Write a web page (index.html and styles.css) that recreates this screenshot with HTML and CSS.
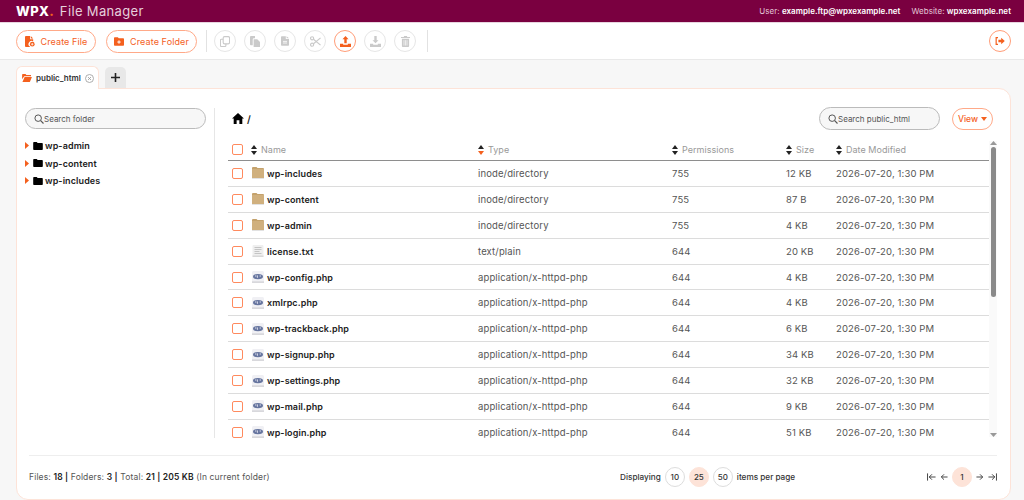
FILE: index.html
```html
<!DOCTYPE html>
<html lang="en">
<head>
    <meta charset="UTF-8">
    <meta name="viewport" content="width=device-width, initial-scale=1.0">
    <title>File Manager</title>
    <link rel="stylesheet" href="styles.css">
</head>
<body>
    <svg class="sprites" width="0" height="0">
        <symbol id="i-sort" viewBox="0 0 6 10"><path d="M3 0l3 4H0z"/><path d="M3 10L0 6h6z"/></symbol>
        <symbol id="i-sort-down" viewBox="0 0 6 10"><path d="M3 0l3 4H0z" fill="#222"/><path d="M3 10L0 6h6z" fill="#f4601e"/></symbol>
        <symbol id="i-caret" viewBox="0 0 4 7"><path d="M0 0l4 3.5L0 7z"/></symbol>
        <symbol id="i-folder" viewBox="0 0 12 10"><path d="M1 0h3.4l1.2 1.3H11a1 1 0 0 1 1 1V9a1 1 0 0 1-1 1H1a1 1 0 0 1-1-1V1a1 1 0 0 1 1-1z"/></symbol>
        <symbol id="i-dir" viewBox="0 0 12 12">
            <rect y="10.8" width="12" height="1.2" fill="#e2e2e2"/>
            <path d="M1 0h3.500l1 1H11a1 1 0 0 1 1 1v9H0V1a1 1 0 0 1 1-1z" fill="#c4a26c"/>
            <rect y="2" width="12" height="9" fill="#d0b07e"/>
        </symbol>
        <symbol id="i-txt" viewBox="0 0 12 12">
            <rect x="0.5" width="11" height="12" rx="1" fill="#efefef"/>
            <path d="M2.500 2.500h7M2.500 4.500h7M2.500 6.500h5M2.500 8.500h7" stroke="#c4c4c4" stroke-width="1"/>
            <rect x="0.5" y="10.500" width="11" height="1.500" fill="#d8d8d8"/>
        </symbol>
        <symbol id="i-php" viewBox="0 0 12 12">
            <rect width="12" height="12" rx="1.500" fill="#f0f0f4"/>
            <rect y="10.300" width="12" height="1.700" fill="#d8d8dc"/>
            <ellipse cx="6" cy="5.600" rx="5" ry="2.600" fill="#66759f"/>
            <path d="M3 5h1.400M5.400 4.400v2.400M7.600 5h1.400" stroke="#e6e8f2" stroke-width="0.9"/>
        </symbol>
        <symbol id="i-search" viewBox="0 0 12 12"><circle cx="5" cy="5" r="3.900" fill="none" stroke="currentColor" stroke-width="1.200"/><path d="M8 8l3.400 3.400" stroke="currentColor" stroke-width="1.400"/></symbol>
    </svg>

    <div class="topbar">
        <div class="brand">
            <span class="logo">WPX<span class="logo-dot">.</span></span>
            <span class="app-name">File Manager</span>
        </div>
        <div class="account">
            <span>User: <b>example.ftp@wpxexample.net</b></span>
            <span>Website: <b>wpxexample.net</b></span>
        </div>
    </div>

    <div class="toolbar">
        <button class="btn btn-file">
            <svg width="10" height="11" viewBox="0 0 11 12"><path d="M1 0h4.500v3.500H9V6a3.200 3.200 0 0 0-3.600 5.600V12H1a1 1 0 0 1-1-1V1a1 1 0 0 1 1-1zM6.300 0L9 2.700H6.300z"/><circle cx="8" cy="9" r="2.600"/><path d="M8 7.600v2.800M6.600 9h2.800" stroke="#fff" stroke-width=".8"/></svg>
            Create File
        </button>
        <button class="btn btn-folder">
            <svg width="10" height="9" viewBox="0 0 13 11"><path d="M1 0h4l1.200 1.400H12a1 1 0 0 1 1 1V10a1 1 0 0 1-1 1H1a1 1 0 0 1-1-1V1a1 1 0 0 1 1-1z"/><path d="M6.500 4v4.400M4.300 6.200h4.400" stroke="#fff" stroke-width="1.300"/></svg>
            Create Folder
        </button>
        <span class="tool-sep"></span>
        <div class="tools">
            <button class="tool"><svg width="10" height="11" viewBox="0 0 11 12" class="outline" stroke="currentColor" stroke-width="1.200"><rect x="3.500" y=".6" width="7" height="8" rx="1.500"/><path d="M3.500 3.500H1.500a1 1 0 0 0-1 1v6a1 1 0 0 0 1 1h4a1 1 0 0 0 1-1V8.500"/></svg></button>
            <button class="tool"><svg width="10" height="11" viewBox="0 0 11 12"><path d="M1 0h4.500v2.500H4.400A1.400 1.400 0 0 0 3 3.900V10H1a1 1 0 0 1-1-1V1a1 1 0 0 1 1-1z"/><path d="M4 3.500h4l3 3V12H4z"/></svg></button>
            <button class="tool"><svg width="8" height="10" viewBox="0 0 10 12"><path d="M1 0h5v3.500h4V11a1 1 0 0 1-1 1H1a1 1 0 0 1-1-1V1a1 1 0 0 1 1-1zM7 0l3 2.700H7z"/><path d="M2.500 6.500h5M2.500 8.500h5" stroke="#fff"/></svg></button>
            <button class="tool"><svg width="11" height="11" viewBox="0 0 12 12" class="outline" stroke="currentColor" stroke-width="1.300"><circle cx="2.300" cy="2.500" r="1.700"/><circle cx="2.300" cy="9.500" r="1.700"/><path d="M3.800 3.500L11.500 10M3.800 8.500L11.500 2"/></svg></button>
            <button class="tool tool-on"><svg width="11" height="11" viewBox="0 0 12 12"><path d="M6 0l3.300 3.500H7.300V8H4.700V3.500H2.700z"/><path d="M0 8.500h3.500v1h5v-1H12V12H0z"/></svg></button>
            <button class="tool"><svg width="11" height="11" viewBox="0 0 12 12"><path d="M4.700 0h2.600v4.500h2L6 8 2.700 4.500h2z"/><path d="M0 8.500h3.500v1h5v-1H12V12H0z"/></svg></button>
            <button class="tool"><svg width="9" height="11" viewBox="0 0 10 12"><path d="M3.500 0h3l.5 1h3v1.200H0V1h3zM1 3h8v8a1 1 0 0 1-1 1H2a1 1 0 0 1-1-1z"/><path d="M3.300 4.500v6M5 4.500v6M6.700 4.500v6" stroke="#fff" stroke-width=".7"/></svg></button>
        </div>
        <span class="tool-sep"></span>
        <button class="tool tool-on tool-exit"><svg width="10" height="8" viewBox="0 0 12 10"><path class="exit-door" d="M3.500 .8H1.200v8.400h2.300" stroke="currentColor" stroke-width="1.500"/><path d="M4 3.500h3.500V.8L12 5 7.500 9.200V6.500H4z"/></svg></button>
    </div>

    <div class="tabs">
        <div class="tab">
            <svg width="10" height="8" viewBox="0 0 11 9"><path d="M.8 0h3l1 1H10v1.500H2.400L0 6V.8A.8.800 0 0 1 .8 0z"/><path d="M2.800 3.300H11L8.700 9H.4z"/></svg>
            <span>public_html</span>
            <svg class="tab-close" width="9" height="9" viewBox="0 0 9 9" fill="none" stroke="#999" stroke-width=".8"><circle cx="4.500" cy="4.500" r="4"/><path d="M3 3l3 3M6 3L3 6"/></svg>
        </div>
        <div class="tab-add">
            <svg width="9" height="9" viewBox="0 0 9 9"><path d="M4.500 0v9M0 4.500h9" stroke="#222" stroke-width="1.600"/></svg>
        </div>
    </div>

    <div class="panel">
        <div class="panel-main">
            <aside class="sidebar">
                <div class="search">
                    <svg width="10" height="10"><use href="#i-search"/></svg>
                    <span>Search folder</span>
                </div>
                <ul class="tree">
                    <li><svg class="caret" width="4" height="7"><use href="#i-caret"/></svg><svg width="10" height="8"><use href="#i-folder"/></svg>wp-admin</li>
                    <li><svg class="caret" width="4" height="7"><use href="#i-caret"/></svg><svg width="10" height="8"><use href="#i-folder"/></svg>wp-content</li>
                    <li><svg class="caret" width="4" height="7"><use href="#i-caret"/></svg><svg width="10" height="8"><use href="#i-folder"/></svg>wp-includes</li>
                </ul>
            </aside>

            <section class="files">
                <div class="files-top">
                    <div class="crumb">
                        <svg width="12" height="11" viewBox="0 0 13 12"><path d="M6.500 0l6.500 6h-1.800v6H8V8H5v4H1.800V6H0z"/></svg>
                        <span>/</span>
                    </div>
                    <div class="search search-files">
                        <svg width="10" height="10"><use href="#i-search"/></svg>
                        <span>Search public_html</span>
                    </div>
                    <button class="view-btn">View <svg width="6" height="4" viewBox="0 0 6 4"><path d="M0 0h6L3 4z"/></svg></button>
                </div>

                <div class="table-wrap">
                    <div class="table">
                        <div class="row head">
                            <span class="check"></span>
                            <span><svg class="sort" width="6" height="10"><use href="#i-sort"/></svg>Name</span>
                            <span><svg class="sort" width="6" height="10"><use href="#i-sort-down"/></svg>Type</span>
                            <span><svg class="sort" width="6" height="10"><use href="#i-sort"/></svg>Permissions</span>
                            <span><svg class="sort" width="6" height="10"><use href="#i-sort"/></svg>Size</span>
                            <span><svg class="sort" width="6" height="10"><use href="#i-sort"/></svg>Date Modified</span>
                        </div>
                        <div class="rows">
                            <div class="row"><span class="check"></span><span class="name"><svg width="12" height="12"><use href="#i-dir"/></svg>wp-includes</span><span>inode/directory</span><span>755</span><span>12 KB</span><span>2026-07-20, 1:30 PM</span></div>
                            <div class="row"><span class="check"></span><span class="name"><svg width="12" height="12"><use href="#i-dir"/></svg>wp-content</span><span>inode/directory</span><span>755</span><span>87 B</span><span>2026-07-20, 1:30 PM</span></div>
                            <div class="row"><span class="check"></span><span class="name"><svg width="12" height="12"><use href="#i-dir"/></svg>wp-admin</span><span>inode/directory</span><span>755</span><span>4 KB</span><span>2026-07-20, 1:30 PM</span></div>
                            <div class="row"><span class="check"></span><span class="name"><svg width="12" height="12"><use href="#i-txt"/></svg>license.txt</span><span>text/plain</span><span>644</span><span>20 KB</span><span>2026-07-20, 1:30 PM</span></div>
                            <div class="row"><span class="check"></span><span class="name"><svg width="12" height="12"><use href="#i-php"/></svg>wp-config.php</span><span>application/x-httpd-php</span><span>644</span><span>4 KB</span><span>2026-07-20, 1:30 PM</span></div>
                            <div class="row"><span class="check"></span><span class="name"><svg width="12" height="12"><use href="#i-php"/></svg>xmlrpc.php</span><span>application/x-httpd-php</span><span>644</span><span>4 KB</span><span>2026-07-20, 1:30 PM</span></div>
                            <div class="row"><span class="check"></span><span class="name"><svg width="12" height="12"><use href="#i-php"/></svg>wp-trackback.php</span><span>application/x-httpd-php</span><span>644</span><span>6 KB</span><span>2026-07-20, 1:30 PM</span></div>
                            <div class="row"><span class="check"></span><span class="name"><svg width="12" height="12"><use href="#i-php"/></svg>wp-signup.php</span><span>application/x-httpd-php</span><span>644</span><span>34 KB</span><span>2026-07-20, 1:30 PM</span></div>
                            <div class="row"><span class="check"></span><span class="name"><svg width="12" height="12"><use href="#i-php"/></svg>wp-settings.php</span><span>application/x-httpd-php</span><span>644</span><span>32 KB</span><span>2026-07-20, 1:30 PM</span></div>
                            <div class="row"><span class="check"></span><span class="name"><svg width="12" height="12"><use href="#i-php"/></svg>wp-mail.php</span><span>application/x-httpd-php</span><span>644</span><span>9 KB</span><span>2026-07-20, 1:30 PM</span></div>
                            <div class="row"><span class="check"></span><span class="name"><svg width="12" height="12"><use href="#i-php"/></svg>wp-login.php</span><span>application/x-httpd-php</span><span>644</span><span>51 KB</span><span>2026-07-20, 1:30 PM</span></div>
                        </div>
                    </div>
                    <div class="scrollbar">
                        <svg width="7" height="4" viewBox="0 0 7 4"><path d="M3.500 0L7 4H0z"/></svg>
                        <div class="scroll-track"><div class="scroll-thumb"></div></div>
                        <svg width="7" height="4" viewBox="0 0 7 4"><path d="M0 0h7L3.500 4z"/></svg>
                    </div>
                </div>
            </section>
        </div>

        <div class="panel-foot">
            <div class="totals">Files: <b>18 |</b> Folders: <b>3 |</b> Total: <b>21 | 205 KB</b> (In current folder)</div>
            <div class="per-page">
                <span>Displaying</span>
                <span class="page-num">10</span>
                <span class="page-num current">25</span>
                <span class="page-num">50</span>
                <span>items per page</span>
            </div>
            <div class="pager">
                <svg width="9" height="8" viewBox="0 0 10 8"><path d="M.6 0v8M9.500 4H2.500M5.500 1l-3 3 3 3" fill="none" stroke="#333" stroke-width="1"/></svg>
                <svg width="8" height="8" viewBox="0 0 9 8"><path d="M8.500 4H1.500M4.500 1l-3 3 3 3" fill="none" stroke="#333" stroke-width="1"/></svg>
                <span class="page-num current">1</span>
                <svg width="8" height="8" viewBox="0 0 9 8"><path d="M.5 4h7M4.500 1l3 3-3 3" fill="none" stroke="#333" stroke-width="1"/></svg>
                <svg width="9" height="8" viewBox="0 0 10 8"><path d="M9.400 0v8M.5 4h7M4.500 1l3 3-3 3" fill="none" stroke="#333" stroke-width="1"/></svg>
            </div>
        </div>
    </div>
</body>
</html>
```

FILE: styles.css
```css
* {
    box-sizing: border-box;
}

body {
    margin: 0;
    height: 500px;
    overflow: hidden;
    background: #f7f7f7;
    font-family: Inter, "Noto Sans", sans-serif;
    font-size: 9px;
    color: #555;
}

b {
    font-weight: 600;
    color: #222;
}

button {
    font-family: inherit;
    background: #fff;
    padding: 0;
    cursor: pointer;
}

.sprites {
    position: absolute;
}

.topbar {
    display: flex;
    justify-content: space-between;
    align-items: center;
    height: 23px;
    padding: 0 13px 1px 16px;
    background: #7a0040;
    border-bottom: 1px solid #e8d5df;
}

.logo {
    font-size: 13px;
    font-weight: 800;
    letter-spacing: 0.4px;
    color: #fff;
    margin-right: 3px;
}

.logo-dot {
    color: #f4601e;
}

.app-name {
    font-size: 13px;
    letter-spacing: 0.35px;
    color: #e6cfdc;
}

.account {
    display: flex;
    gap: 11px;
    font-size: 8px;
    letter-spacing: 0.04px;
    color: #e3c6d6;
}

.account b {
    color: #fff;
}

.toolbar {
    display: flex;
    align-items: center;
    height: 37px;
    padding: 0 13px 0 16px;
    background: #fff;
    border-bottom: 1px solid #e9e9e9;
}

.btn {
    display: flex;
    align-items: center;
    justify-content: center;
    gap: 6px;
    height: 23px;
    border: 1px solid #ffa988;
    border-radius: 12px;
    font-size: 9px;
    letter-spacing: 0.1px;
    color: #f4601e;
}

.btn svg {
    fill: #f4601e;
}

.btn-file {
    width: 80px;
    margin-right: 10px;
}

.btn-folder {
    width: 91px;
    margin-right: 9px;
}

.tool-sep {
    width: 1px;
    height: 22px;
    background: #e2e2e2;
}

.tools {
    display: flex;
    gap: 8px;
    margin: 0 11px 0 7px;
}

.tool {
    display: flex;
    align-items: center;
    justify-content: center;
    width: 22px;
    height: 22px;
    border: 1px solid #e6e6e6;
    border-radius: 50%;
    color: #cacaca;
}

.tool svg {
    fill: #cacaca;
}

.tool svg.outline {
    fill: none;
}

.tool-on {
    border-color: #ff9d78;
    color: #f4601e;
}

.tool-on svg {
    fill: #f4601e;
}

.tool-exit {
    margin-left: auto;
}

.exit-door {
    fill: none;
}

.tabs {
    display: flex;
    align-items: flex-end;
    gap: 6px;
    height: 28px;
    padding-left: 16px;
}

.tab {
    display: flex;
    align-items: center;
    gap: 4px;
    width: 83px;
    height: 23px;
    margin-bottom: -1px;
    padding-left: 5px;
    background: #fff;
    border: 1px solid #fde3d8;
    border-bottom: none;
    border-radius: 6px 6px 0 0;
    font-size: 8px;
    font-weight: 600;
    color: #333;
    position: relative;
    z-index: 1;
}

.tab > svg:first-child {
    fill: #f4601e;
}

.tab-add {
    display: flex;
    align-items: center;
    justify-content: center;
    width: 21px;
    height: 21px;
    background: #e8e8e8;
    border-radius: 5px 5px 0 0;
}

.panel {
    display: flex;
    flex-direction: column;
    height: 412px;
    margin: 0 13px 0 16px;
    padding: 19px 13px 0 8px;
    background: #fff;
    border: 1px solid #fde3d8;
    border-radius: 0 12px 12px 12px;
}

.panel-main {
    display: flex;
    height: 330px;
}

.sidebar {
    width: 190px;
    padding-right: 8px;
    border-right: 1px solid #e6e6e6;
}

.search {
    display: flex;
    align-items: center;
    height: 21px;
    padding-left: 8px;
    background: #f7f7f7;
    border: 1px solid #bbb;
    border-radius: 11px;
    font-size: 8px;
    color: #555;
}

.search-files {
    width: 121px;
    height: 23px;
    margin-left: auto;
    margin-right: 12px;
    border-radius: 12px;
}

.tree {
    margin: 8px 0 0;
    padding: 0;
    list-style: none;
}

.tree li {
    display: flex;
    align-items: center;
    height: 17.5px;
    font-size: 9px;
    font-weight: 600;
    letter-spacing: 0.1px;
    color: #222;
}

.tree svg {
    margin-right: 2px;
    fill: #000;
}

.tree .caret {
    margin-right: 4px;
    fill: #f4601e;
}

.files {
    flex: 1;
    min-width: 0;
    padding-left: 13px;
}

.files-top {
    display: flex;
    align-items: center;
    height: 23px;
    margin: -1px 4px 9px 0;
    padding-left: 4px;
}

.crumb {
    display: flex;
    align-items: center;
    gap: 3px;
    font-size: 10px;
    font-weight: 600;
    color: #222;
}

.view-btn {
    display: flex;
    align-items: center;
    justify-content: center;
    gap: 3px;
    width: 41px;
    height: 22px;
    border: 1px solid #ffa988;
    border-radius: 11px;
    font-size: 8.5px;
    font-weight: 500;
    color: #f4601e;
}

.view-btn svg {
    fill: #f4601e;
}

.table-wrap {
    display: flex;
    height: 300px;
}

.table {
    flex: 1;
    min-width: 0;
    overflow: hidden;
}

.rows {
    height: 278px;
    overflow: hidden;
}

.row {
    display: grid;
    grid-template-columns: 19px 227px 194px 114px 50px 1fr;
    align-items: center;
    height: 25.9px;
    padding-left: 4px;
    border-bottom: 1px solid #dcdcdc;
    font-size: 9.5px;
    letter-spacing: 0.13px;
}

.row.head {
    height: 22px;
    border-bottom: 1px solid #8e8e8e;
    font-size: 9px;
    letter-spacing: 0.03px;
    color: #999;
}

.sort {
    margin-right: 4px;
    fill: #222;
    vertical-align: -1.5px;
}

.check {
    width: 11px;
    height: 11px;
    border: 1.5px solid #ff8a5e;
    border-radius: 2px;
}

.name {
    display: flex;
    align-items: center;
    gap: 3px;
    padding-left: 1px;
    font-size: 9px;
    font-weight: 600;
    letter-spacing: 0.1px;
    color: #222;
}

.name svg {
    flex: none;
}

.scrollbar {
    display: flex;
    flex-direction: column;
    align-items: center;
    width: 8px;
    height: 296px;
    margin-left: -1px;
    fill: #999;
    background: #fafafa;
    position: relative;
    top: 2px;
}

.scroll-track {
    flex: 1;
    width: 100%;
    padding: 2px 1px 2px 2px;
}

.scroll-thumb {
    width: 100%;
    height: 150px;
    background: #8a8a8a;
    border-radius: 3px;
}

.panel-foot {
    display: flex;
    align-items: center;
    height: 42px;
    margin: 17px 0 0 4px;
    border-top: 1px solid #eee;
    font-size: 8.5px;
}

.totals {
    width: 591px;
    letter-spacing: 0.15px;
}

.per-page {
    display: flex;
    align-items: center;
    gap: 4px;
    font-size: 8.2px;
    font-weight: 500;
    color: #333;
}

.page-num {
    display: flex;
    align-items: center;
    justify-content: center;
    width: 20px;
    height: 20px;
    border: 1px solid #ddd;
    border-radius: 50%;
    font-size: 8px;
    font-weight: 500;
    color: #333;
}

.page-num.current {
    background: #fde3d8;
    border-color: #fde3d8;
}

.pager {
    display: flex;
    align-items: center;
    gap: 4px;
    margin-left: auto;
}
```
